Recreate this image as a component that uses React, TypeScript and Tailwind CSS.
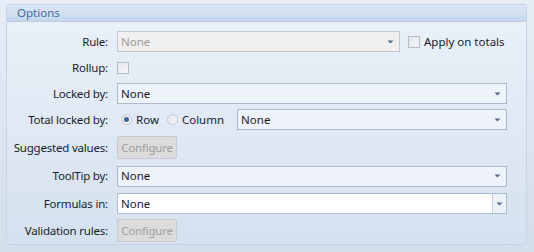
import React from 'react';

const font = { fontFamily: '"Noto Sans", "Liberation Sans", sans-serif' };

const Arrow = () => (
  <svg width="7" height="4" viewBox="0 0 7 4" className="shrink-0">
    <path d="M0.5 0.5 L6.5 0.5 L3.5 3.5 Z" fill="#56688a" />
  </svg>
);

const Combo = ({ disabled = false, white = false, className = '' }: { disabled?: boolean; white?: boolean; className?: string }) => {
  if (white) {
    return (
      <div className={`flex h-[21px] items-stretch border border-[#abbad0] bg-white ${className}`}>
        <div className="flex flex-1 items-center pl-[3px] text-[11.5px] text-[#1a1a1a]">None</div>
        <div className="flex w-[14px] items-center justify-center border-l border-[#c4cfdf] bg-[#edf2f9]">
          <Arrow />
        </div>
      </div>
    );
  }
  return (
    <div
      className={`flex h-[21px] items-center justify-between pl-[3px] pr-[5px] text-[11.5px] ${
        disabled ? 'border border-[#c3c8d0] bg-[#f0f0f0] text-[#9b9b9b]' : 'border border-[#abbad0] bg-[#eef3fa] text-[#1a1a1a]'
      } ${className}`}
    >
      <span>None</span>
      <Arrow />
    </div>
  );
};

const CheckBox = () => (
  <div className="h-[12px] w-[12px] shrink-0 border border-[#b4bcc8] bg-gradient-to-br from-[#e2e5ea] to-[#f6f7f9]" />
);

const Radio = ({ checked = false }: { checked?: boolean }) => (
  <div className="flex h-[11px] w-[11px] shrink-0 items-center justify-center rounded-full border border-[#c2c8d0] bg-gradient-to-br from-[#dfe3e8] to-[#f8f9fb]">
    {checked && <div className="h-[5px] w-[5px] rounded-full bg-[#3d5f99]" />}
  </div>
);

const Button = () => (
  <div className="flex h-[23px] w-[60px] items-center justify-center rounded-[2px] border border-[#c6c9cd] bg-[#dcdcdc] text-[11.5px] tracking-[-0.2px] text-[#9f9f9f]">
    Configure
  </div>
);

const Row = ({ label, h, children }: { label: string; h: string; children: React.ReactNode }) => (
  <div className={`flex items-center ${h}`}>
    <div className="w-[101px] shrink-0 whitespace-nowrap text-right text-[11.5px] tracking-[-0.2px] text-[#161d2c]">{label}</div>
    <div className="ml-[9px] flex flex-1 items-center whitespace-nowrap">{children}</div>
  </div>
);

export default function App() {
  return (
    <div style={font} className="h-[252px] w-[534px] bg-gradient-to-b from-[#e6edf6] to-[#d3deeb] pl-[6px] pr-[7px] pt-[4px]">
      <div className="h-[241px] w-[521px] rounded-[3px] border border-[#c6d4e5] bg-gradient-to-b from-[#ebf1f9] to-[#d5e1ef]">
        <div className="flex h-[17px] items-center border-b border-[#bccde3] bg-gradient-to-b from-[#dce7f4] to-[#c5d7ed] pl-[10px] text-[11.5px] text-[#48689f]">
          Options
        </div>
        <div className="flex flex-col pt-[6px] pr-[19px]">
          <Row label="Rule:" h="h-[27px]">
            <Combo disabled className="w-[283px] shrink-0" />
            <div className="ml-[8px] flex items-center">
              <CheckBox />
              <span className="ml-[4px] text-[11.5px] text-[#161d2c]">Apply on totals</span>
            </div>
          </Row>
          <Row label="Rollup:" h="h-[26px]">
            <CheckBox />
          </Row>
          <Row label="Locked by:" h="h-[25px]">
            <Combo className="flex-1" />
          </Row>
          <Row label="Total locked by:" h="h-[27px]">
            <div className="ml-[4px] flex items-center">
              <Radio checked />
              <span className="ml-[4px] text-[11.5px] text-[#161d2c]">Row</span>
            </div>
            <div className="ml-[8px] flex items-center">
              <Radio />
              <span className="ml-[4px] text-[11.5px] text-[#161d2c]">Column</span>
            </div>
            <Combo className="ml-[13px] flex-1" />
          </Row>
          <Row label="Suggested values:" h="h-[29px]">
            <Button />
          </Row>
          <Row label="ToolTip by:" h="h-[28px]">
            <Combo className="flex-1" />
          </Row>
          <Row label="Formulas in:" h="h-[27px]">
            <Combo white className="flex-1" />
          </Row>
          <Row label="Validation rules:" h="h-[27px]">
            <Button />
          </Row>
        </div>
      </div>
    </div>
  );
}
